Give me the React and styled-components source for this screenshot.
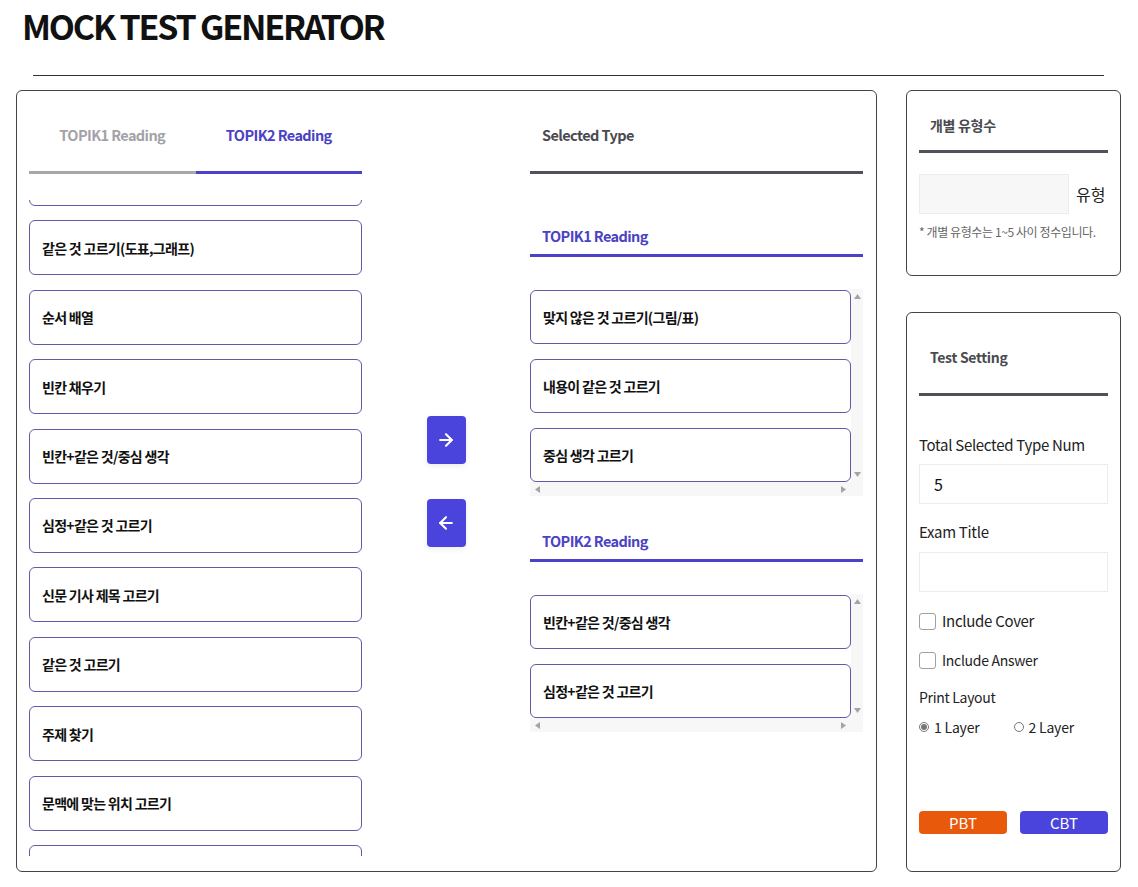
import React, { useLayoutEffect, useRef } from 'react';
import styled, { createGlobalStyle } from 'styled-components';
import { ArrowRight, ArrowLeft } from 'lucide-react';

const GlobalStyle = createGlobalStyle`
  body {
    margin: 0;
    background: #fff;
    font-family: "Noto Sans CJK KR", "Noto Sans", sans-serif;
    color: #111;
  }
`

const Page = styled.div`
  width: 1138px;
  box-sizing: border-box;
  padding: 0 17px 0 16px;
`

const Title = styled.h1`
  margin: 0;
  padding-left: 6px;
  font-size: 34px;
  line-height: 52px;
  font-weight: 700;
  letter-spacing: -2.2px;
  color: #111;
`

const Divider = styled.hr`
  width: 1071px;
  margin: 23px 0 14px 17px;
  border: none;
  border-top: 1px solid #333;
`

const Body = styled.div`
  display: flex;
  gap: 29px;
`

const MainPanel = styled.div`
  width: 861px;
  height: 782px;
  box-sizing: border-box;
  border: 1px solid #444;
  border-radius: 6px;
  padding: 0 13px 0 12px;
  display: grid;
  grid-template-columns: 333px 1fr 333px;
`

const Column = styled.div`
  display: flex;
  flex-direction: column;
  min-height: 0;
`

const Tabs = styled.div`
  display: flex;
`

const Tab = styled.div`
  flex: 1;
  padding: 32px 0 24px;
  font-size: 14.5px;
  line-height: 24px;
  font-weight: 700;
  letter-spacing: -0.6px;
  text-align: ${({ $left }) => ($left ? 'left' : 'center')};
  padding-left: ${({ $left }) => ($left ? '12px' : '0')};
  color: ${({ $tone }) => ($tone === 'active' ? '#4b42c4' : $tone === 'dark' ? '#4a4a50' : '#a2a2a8')};
  border-bottom: 3px solid ${({ $tone }) => ($tone === 'active' ? '#4b42cc' : $tone === 'dark' ? '#4f5259' : '#a6a6ab')};
`

const ItemList = styled.div`
  margin-top: 26px;
  height: 656px;
  overflow-y: auto;
  scrollbar-width: none;
  &::-webkit-scrollbar {
    display: none;
  }
`

const Item = styled.div`
  height: ${({ $h }) => $h || 55}px;
  box-sizing: border-box;
  margin-bottom: 14.4px;
  border: 1px solid #615ba6;
  border-radius: 6px;
  padding-left: 12px;
  display: flex;
  align-items: center;
  font-size: 14px;
  font-weight: 700;
  letter-spacing: -0.7px;
  color: #111;
  background: #fff;
  &:last-child {
    margin-bottom: 0;
  }
`

const Middle = styled.div`
  display: flex;
  flex-direction: column;
  align-items: center;
  justify-content: center;
  gap: 35px;
`

const ArrowButton = styled.button`
  width: 39px;
  height: 48px;
  border: none;
  border-radius: 4px;
  background: #4b44dc;
  color: #fff;
  display: flex;
  align-items: center;
  justify-content: center;
  box-shadow: 0 2px 6px rgba(0, 0, 0, 0.08);
  cursor: pointer;
  padding: 0;
`

const SectionTitle = styled.div`
  margin-top: ${({ $top }) => $top}px;
  padding-left: 12px;
  font-size: 14.5px;
  line-height: 24px;
  font-weight: 700;
  letter-spacing: -0.6px;
  color: #4b42c4;
  padding-bottom: 6px;
  border-bottom: 3px solid #4b42cc;
`

// 선택된 유형 박스 + 스크롤바 트랙
const ScrollFrame = styled.div`
  margin-top: 32px;
  display: grid;
  grid-template-columns: 1fr 12px;
  grid-template-rows: auto 14px;
`

const ScrollContent = styled.div`
  padding-top: 1px;
  & > div {
    margin-bottom: 15px;
  }
  & > div:last-child {
    margin-bottom: 0;
  }
`

const Rail = styled.div`
  background: #f7f7f7;
  display: flex;
  flex-direction: ${({ $vertical }) => ($vertical ? 'column' : 'row')};
  justify-content: space-between;
  align-items: center;
  padding: ${({ $vertical }) => ($vertical ? '4px 0' : '0 4px')};
  color: #a4a4a4;
`

const Corner = styled.div`
  background: #f7f7f7;
`

const Triangle = ({ dir }) => {
  const points = {
    up: '0,6 3.5,1 7,6',
    down: '0,1 3.5,6 7,1',
    left: '6,0 1,3.5 6,7',
    right: '1,0 6,3.5 1,7',
  }[dir]
  return (
    <svg width='7' height='7' viewBox='0 0 7 7'>
      <polygon points={points} fill='currentColor' />
    </svg>
  )
}

const SideColumn = styled.div`
  width: 215px;
  display: flex;
  flex-direction: column;
  gap: 36px;
`

const SidePanel = styled.div`
  box-sizing: border-box;
  border: 1px solid #444;
  border-radius: 6px;
  padding: 0 12px;
  height: ${({ $h }) => ($h ? `${$h}px` : 'auto')};
  flex: ${({ $grow }) => ($grow ? 1 : 'none')};
  display: flex;
  flex-direction: column;
`

const SideTitle = styled.div`
  padding: ${({ $pad }) => $pad};
  padding-left: 11px;
  font-size: 14px;
  line-height: 24px;
  font-weight: 700;
  letter-spacing: -0.3px;
  color: #4a4a50;
  border-bottom: 3px solid #4f5259;
`

const CountRow = styled.div`
  margin-top: 21px;
  display: flex;
  align-items: center;
  gap: 7px;
`

const TextInput = styled.input`
  width: ${({ $w }) => $w};
  height: 40px;
  box-sizing: border-box;
  border: 1px solid #ececec;
  background: ${({ $fill }) => ($fill ? '#f7f7f7' : '#fff')};
  padding: 0 14px;
  font-family: inherit;
  font-size: 16px;
  color: #111;
  outline: none;
`

const Unit = styled.span`
  font-size: 16px;
  color: #222;
`

const Note = styled.p`
  margin: 9px 0 0;
  font-size: 12px;
  line-height: 18px;
  letter-spacing: -0.4px;
  color: #666;
`

const FieldLabel = styled.div`
  margin-top: ${({ $top }) => $top}px;
  margin-bottom: ${({ $bottom }) => $bottom || 0}px;
  font-size: ${({ $size }) => $size || 15}px;
  line-height: 24px;
  letter-spacing: -0.3px;
  color: #222;
`

const CheckRow = styled.label`
  margin-top: ${({ $top }) => $top}px;
  display: flex;
  align-items: center;
  gap: 6px;
  font-size: ${({ $size }) => $size}px;
  line-height: 20px;
  letter-spacing: -0.3px;
  color: #222;
`

const CheckBox = styled.input`
  width: 17px;
  height: 17px;
  margin: 0;
  appearance: none;
  border: 1px solid #a0a0a0;
  border-radius: 3px;
  background: #fff;
`

const RadioRow = styled.div`
  margin-top: 8px;
  display: flex;
  align-items: center;
  font-size: 14px;
  letter-spacing: -0.2px;
  color: #222;
`

const RadioLabel = styled.label`
  display: flex;
  align-items: center;
  gap: 5px;
  width: 95px;
`

const Radio = styled.input`
  width: 10px;
  height: 10px;
  margin: 0;
  accent-color: #777;
`

const ButtonRow = styled.div`
  margin-top: auto;
  margin-bottom: 37px;
  display: flex;
  justify-content: space-between;
`

const ActionButton = styled.button`
  width: 88px;
  height: 23px;
  border: none;
  border-radius: 4px;
  background: ${({ $orange }) => ($orange ? '#e8590c' : '#4b44dc')};
  color: #fff;
  font-family: inherit;
  font-size: 15px;
  line-height: 23px;
  padding: 0;
  cursor: pointer;
`

const topik2Types = [
  '빈칸 채우기(광고)',
  '같은 것 고르기(도표,그래프)',
  '순서 배열',
  '빈칸 채우기',
  '빈칸+같은 것/중심 생각',
  '심정+같은 것 고르기',
  '신문 기사 제목 고르기',
  '같은 것 고르기',
  '주제 찾기',
  '문맥에 맞는 위치 고르기',
  '필자의 태도 고르기',
]

const selected1 = ['맞지 않은 것 고르기(그림/표)', '내용이 같은 것 고르기', '중심 생각 고르기']
const selected2 = ['빈칸+같은 것/중심 생각', '심정+같은 것 고르기']

function SelectedList({ items }) {
  return (
    <ScrollFrame>
      <ScrollContent>
        {items.map((t) => <Item key={t} $h={54}>{t}</Item>)}
      </ScrollContent>
      <Rail $vertical>
        <Triangle dir='up' />
        <Triangle dir='down' />
      </Rail>
      <Rail>
        <Triangle dir='left' />
        <Triangle dir='right' />
      </Rail>
      <Corner />
    </ScrollFrame>
  )
}

export default function App() {
  const listRef = useRef(null)

  useLayoutEffect(() => {
    if (listRef.current) listRef.current.scrollTop = 49
  }, []) // 스크롤된 상태 재현

  return (
    <Page>
      <GlobalStyle />
      <Title>MOCK TEST GENERATOR</Title>
      <Divider />
      <Body>
        <MainPanel>
          <Column>
            <Tabs>
              <Tab $tone='idle'>TOPIK1 Reading</Tab>
              <Tab $tone='active'>TOPIK2 Reading</Tab>
            </Tabs>
            <ItemList ref={listRef}>
              {topik2Types.map((t) => <Item key={t}>{t}</Item>)}
            </ItemList>
          </Column>

          <Middle>
            <ArrowButton><ArrowRight size={20} strokeWidth={2.5} /></ArrowButton>
            <ArrowButton><ArrowLeft size={20} strokeWidth={2.5} /></ArrowButton>
          </Middle>

          <Column>
            <Tabs>
              <Tab $tone='dark' $left>Selected Type</Tab>
            </Tabs>
            <SectionTitle $top={50}>TOPIK1 Reading</SectionTitle>
            <SelectedList items={selected1} />
            <SectionTitle $top={33}>TOPIK2 Reading</SectionTitle>
            <SelectedList items={selected2} />
          </Column>
        </MainPanel>

        <SideColumn>
          <SidePanel $h={186}>
            <SideTitle $pad='22px 0 13px'>개별 유형수</SideTitle>
            <CountRow>
              <TextInput $w='150px' $fill />
              <Unit>유형</Unit>
            </CountRow>
            <Note>* 개별 유형수는 1~5 사이 정수입니다.</Note>
          </SidePanel>

          <SidePanel $grow>
            <SideTitle $pad='32px 0 24px'>Test Setting</SideTitle>
            <FieldLabel $top={37} $bottom={7}>Total Selected Type Num</FieldLabel>
            <TextInput $w='100%' defaultValue='5' />
            <FieldLabel $top={16} $bottom={8}>Exam Title</FieldLabel>
            <TextInput $w='100%' />
            <CheckRow $top={19} $size={15}><CheckBox type='checkbox' />Include Cover</CheckRow>
            <CheckRow $top={19} $size={14}><CheckBox type='checkbox' />Include Answer</CheckRow>
            <FieldLabel $top={15} $size={14}>Print Layout</FieldLabel>
            <RadioRow>
              <RadioLabel><Radio type='radio' name='layout' defaultChecked />1 Layer</RadioLabel>
              <RadioLabel><Radio type='radio' name='layout' />2 Layer</RadioLabel>
            </RadioRow>
            <ButtonRow>
              <ActionButton $orange>PBT</ActionButton>
              <ActionButton>CBT</ActionButton>
            </ButtonRow>
          </SidePanel>
        </SideColumn>
      </Body>
    </Page>
  )
}
